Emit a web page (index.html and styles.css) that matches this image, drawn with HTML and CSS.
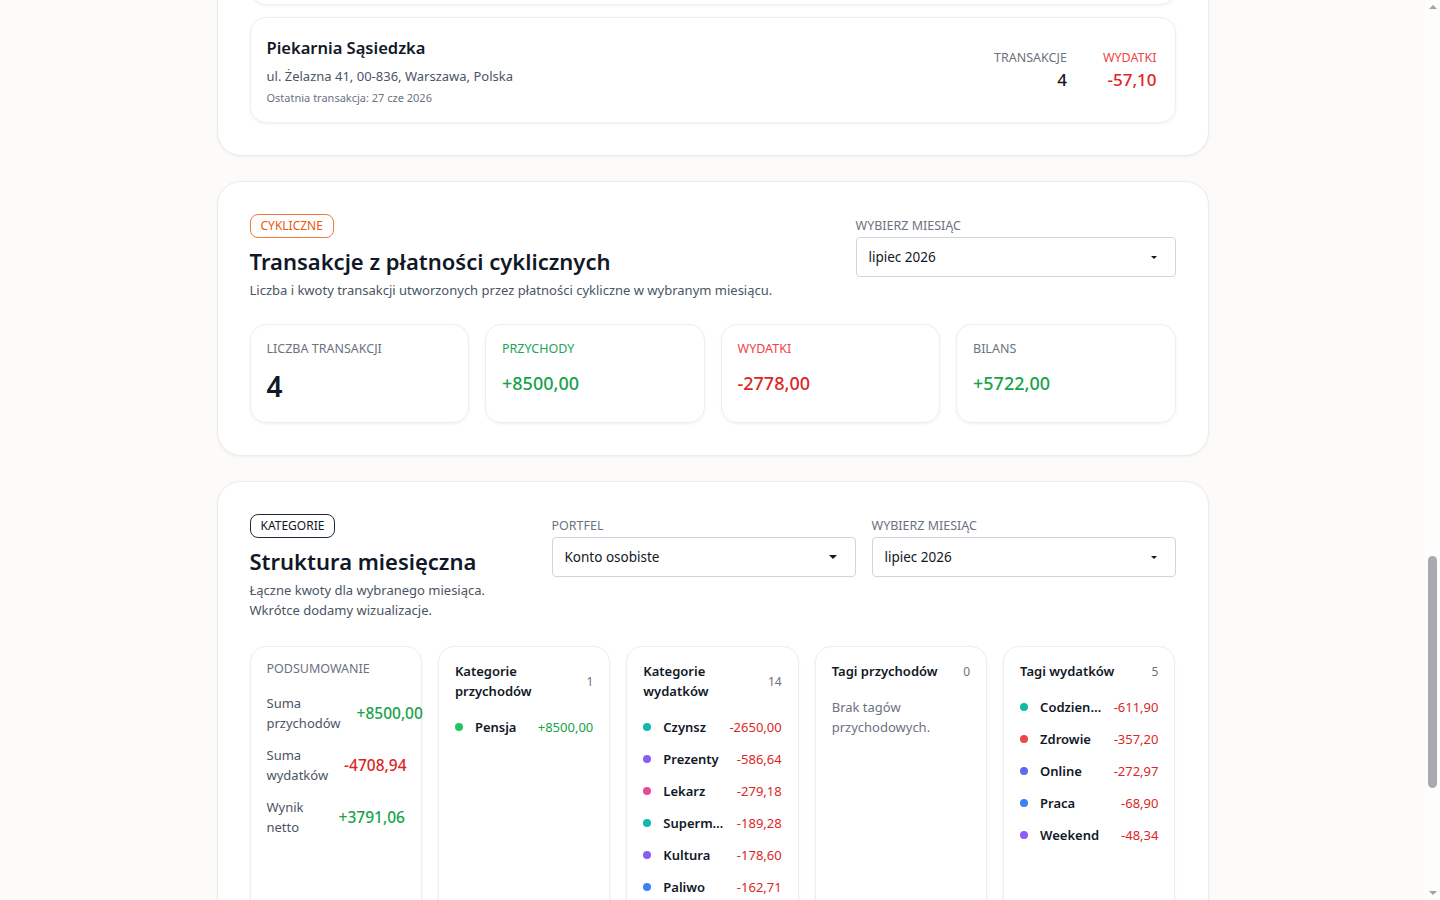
FILE: index.html
```html
<!DOCTYPE html>
<html lang="pl">
<head>
    <meta charset="utf-8">
    <title>Raporty</title>
    <link rel="stylesheet" href="styles.css">
</head>
<body>
    <main class="page">

        <!-- sprzedawcy -->
        <section class="panel">
            <div class="merchant-list">
                <div class="merchant">
                    <div class="merchant-info">
                        <h3 class="merchant-name">Biedronka</h3>
                        <p class="merchant-address">ul. Marszałkowska 104, 00-017, Warszawa, Polska</p>
                        <p class="merchant-last">Ostatnia transakcja: 29 cze 2026</p>
                    </div>
                    <div class="merchant-stats">
                        <div class="mstat">
                            <span class="mstat-label">Transakcje</span>
                            <span class="mstat-value">6</span>
                        </div>
                        <div class="mstat">
                            <span class="mstat-label red">Wydatki</span>
                            <span class="mstat-value red">-189,28</span>
                        </div>
                    </div>
                </div>
                <div class="merchant">
                    <div class="merchant-info">
                        <h3 class="merchant-name">Piekarnia Sąsiedzka</h3>
                        <p class="merchant-address">ul. Żelazna 41, 00-836, Warszawa, Polska</p>
                        <p class="merchant-last">Ostatnia transakcja: 27 cze 2026</p>
                    </div>
                    <div class="merchant-stats">
                        <div class="mstat">
                            <span class="mstat-label">Transakcje</span>
                            <span class="mstat-value">4</span>
                        </div>
                        <div class="mstat">
                            <span class="mstat-label red">Wydatki</span>
                            <span class="mstat-value red">-57,10</span>
                        </div>
                    </div>
                </div>
            </div>
        </section>

        <!-- cykliczne -->
        <section class="panel">
            <div class="panel-head">
                <div class="panel-title">
                    <span class="badge badge-orange">Cykliczne</span>
                    <h2>Transakcje z płatności cyklicznych</h2>
                    <p class="panel-desc">Liczba i kwoty transakcji utworzonych przez płatności cykliczne w wybranym miesiącu.</p>
                </div>
                <div class="field field-wide">
                    <span class="field-label">Wybierz miesiąc</span>
                    <div class="select">
                        <span>lipiec 2026</span>
                        <svg width="6" height="3" viewBox="0 0 6 3"><path d="M0 0h6L3 3z" fill="#111827"/></svg>
                    </div>
                </div>
            </div>

            <div class="stat-grid">
                <div class="stat">
                    <span class="stat-label">Liczba transakcji</span>
                    <span class="stat-value big">4</span>
                </div>
                <div class="stat">
                    <span class="stat-label green">Przychody</span>
                    <span class="stat-value green">+8500,00</span>
                </div>
                <div class="stat">
                    <span class="stat-label red">Wydatki</span>
                    <span class="stat-value red">-2778,00</span>
                </div>
                <div class="stat">
                    <span class="stat-label">Bilans</span>
                    <span class="stat-value green">+5722,00</span>
                </div>
            </div>
        </section>

        <!-- kategorie -->
        <section class="panel">
            <div class="panel-head">
                <div class="panel-title">
                    <span class="badge badge-dark">Kategorie</span>
                    <h2>Struktura miesięczna</h2>
                    <p class="panel-desc">Łączne kwoty dla wybranego miesiąca.<br>Wkrótce dodamy wizualizacje.</p>
                </div>
                <div class="filters">
                    <div class="field">
                        <span class="field-label">Portfel</span>
                        <div class="select">
                            <span>Konto osobiste</span>
                            <svg width="8" height="4" viewBox="0 0 8 4"><path d="M0 0h8L4 4z" fill="#111827"/></svg>
                        </div>
                    </div>
                    <div class="field">
                        <span class="field-label">Wybierz miesiąc</span>
                        <div class="select">
                            <span>lipiec 2026</span>
                            <svg width="6" height="3" viewBox="0 0 6 3"><path d="M0 0h6L3 3z" fill="#111827"/></svg>
                        </div>
                    </div>
                </div>
            </div>

            <div class="breakdown">
                <div class="box">
                    <span class="box-label">Podsumowanie</span>
                    <div class="sum-list">
                        <div class="sum-row">
                            <span class="sum-name">Suma przychodów</span>
                            <span class="sum-value green">+8500,00</span>
                        </div>
                        <div class="sum-row">
                            <span class="sum-name">Suma wydatków</span>
                            <span class="sum-value red">-4708,94</span>
                        </div>
                        <div class="sum-row">
                            <span class="sum-name">Wynik netto</span>
                            <span class="sum-value green">+3791,06</span>
                        </div>
                    </div>
                </div>

                <div class="box">
                    <div class="box-head">
                        <h4>Kategorie przychodów</h4>
                        <span class="count">1</span>
                    </div>
                    <ul class="items">
                        <li><i class="dot" style="background:#22c55e"></i><span class="item-name">Pensja</span><span class="item-amount green">+8500,00</span></li>
                    </ul>
                </div>

                <div class="box">
                    <div class="box-head">
                        <h4>Kategorie wydatków</h4>
                        <span class="count">14</span>
                    </div>
                    <ul class="items">
                        <li><i class="dot" style="background:#14b8a6"></i><span class="item-name">Czynsz</span><span class="item-amount red">-2650,00</span></li>
                        <li><i class="dot" style="background:#8b5cf6"></i><span class="item-name">Prezenty</span><span class="item-amount red">-586,64</span></li>
                        <li><i class="dot" style="background:#ec4899"></i><span class="item-name">Lekarz</span><span class="item-amount red">-279,18</span></li>
                        <li><i class="dot" style="background:#14b8a6"></i><span class="item-name">Supermarket</span><span class="item-amount red">-189,28</span></li>
                        <li><i class="dot" style="background:#8b5cf6"></i><span class="item-name">Kultura</span><span class="item-amount red">-178,60</span></li>
                        <li><i class="dot" style="background:#3b82f6"></i><span class="item-name">Paliwo</span><span class="item-amount red">-162,71</span></li>
                        <li><i class="dot" style="background:#f59e0b"></i><span class="item-name">Restauracje</span><span class="item-amount red">-148,20</span></li>
                        <li><i class="dot" style="background:#ef4444"></i><span class="item-name">Apteka</span><span class="item-amount red">-96,40</span></li>
                    </ul>
                </div>

                <div class="box">
                    <div class="box-head">
                        <h4>Tagi przychodów</h4>
                        <span class="count">0</span>
                    </div>
                    <p class="empty">Brak tagów przychodowych.</p>
                </div>

                <div class="box">
                    <div class="box-head">
                        <h4>Tagi wydatków</h4>
                        <span class="count">5</span>
                    </div>
                    <ul class="items">
                        <li><i class="dot" style="background:#14b8a6"></i><span class="item-name">Codziennie</span><span class="item-amount red">-611,90</span></li>
                        <li><i class="dot" style="background:#ef4444"></i><span class="item-name">Zdrowie</span><span class="item-amount red">-357,20</span></li>
                        <li><i class="dot" style="background:#6366f1"></i><span class="item-name">Online</span><span class="item-amount red">-272,97</span></li>
                        <li><i class="dot" style="background:#3b82f6"></i><span class="item-name">Praca</span><span class="item-amount red">-68,90</span></li>
                        <li><i class="dot" style="background:#8b5cf6"></i><span class="item-name">Weekend</span><span class="item-amount red">-48,34</span></li>
                    </ul>
                </div>
            </div>
        </section>

    </main>

    <!-- pasek przewijania okna -->
    <div class="scrollbar">
        <svg class="sb-arrow sb-up" width="8" height="4" viewBox="0 0 8 4"><path d="M0 4L4 0l4 4z" fill="#a3a3a3"/></svg>
        <div class="sb-thumb"></div>
        <svg class="sb-arrow sb-down" width="8" height="4" viewBox="0 0 8 4"><path d="M0 0h8L4 4z" fill="#a3a3a3"/></svg>
    </div>
</body>
</html>
```

FILE: styles.css
```css
* {
    box-sizing: border-box;
}

body {
    margin: 0;
    padding: 0 15px 0 0;
    background-color: #fcfbf9;
    font-family: "Noto Sans", "Open Sans", sans-serif;
    color: #111827;
}

h2, h3, h4, p, ul {
    margin: 0;
    padding: 0;
}

.page {
    width: 992px;
    margin: -134px auto 0;
    display: flex;
    flex-direction: column;
    gap: 25px;
    padding-bottom: 40px;
}

.panel {
    background: #ffffff;
    border: 1px solid #efece7;
    border-radius: 24px;
    padding: 32px;
    box-shadow: 0 1px 3px rgba(30, 20, 10, 0.05);
}

.green { color: #16a34a; }
.red { color: #dc2626; }

/* sprzedawcy */

.merchant-list {
    display: flex;
    flex-direction: column;
    gap: 12px;
}

.merchant {
    display: flex;
    justify-content: space-between;
    align-items: center;
    padding: 18px 18px 16px 16px;
    border: 1px solid #f1eeea;
    border-radius: 16px;
    box-shadow: 0 1px 3px rgba(30, 20, 10, 0.06);
}

.merchant-name {
    font-size: 16.5px;
    line-height: 24px;
    font-weight: 600;
}

.merchant-address {
    margin-top: 6px;
    font-size: 13px;
    line-height: 20px;
    color: #4b5563;
}

.merchant-last {
    margin-top: 3px;
    font-size: 11px;
    line-height: 17px;
    color: #6b7280;
}

.merchant-stats {
    display: flex;
    gap: 36px;
}

.mstat {
    display: flex;
    flex-direction: column;
    align-items: flex-end;
}

.mstat-label {
    font-size: 12.5px;
    line-height: 16px;
    text-transform: uppercase;
    color: #6b7280;
}

.mstat-label.red { color: #ef4444; }

.mstat-value {
    margin-top: 2px;
    font-size: 17px;
    line-height: 24px;
    font-weight: 500;
}

/* nagłówki paneli */

.panel-head {
    display: flex;
    justify-content: space-between;
    align-items: flex-start;
    gap: 16px;
}

.panel-title {
    display: flex;
    flex-direction: column;
    align-items: flex-start;
}

.badge {
    padding: 0 10px;
    font-size: 12px;
    line-height: 22px;
    text-transform: uppercase;
    border-radius: 8px;
    border: 1px solid;
}

.badge-orange {
    color: #ea580c;
    border-color: #f07a3a;
}

.badge-dark {
    color: #111827;
    border-color: #1f2937;
}

.panel-title h2 {
    margin-top: 8px;
    font-size: 22px;
    line-height: 30px;
    font-weight: 600;
}

.panel-desc {
    margin-top: 4px;
    font-size: 13px;
    line-height: 20px;
    color: #4b5563;
}

.field {
    display: flex;
    flex-direction: column;
    gap: 3px;
    padding-top: 4px;
    width: 304px;
}

.field-wide {
    width: 320px;
}

.field-label {
    font-size: 12.5px;
    line-height: 16px;
    text-transform: uppercase;
    color: #6b7280;
}

.select {
    height: 40px;
    display: flex;
    align-items: center;
    justify-content: space-between;
    padding: 0 18px 0 12px;
    border: 1px solid #d1d5db;
    border-radius: 4px;
    font-size: 13.5px;
    background: #ffffff;
}

.filters {
    display: flex;
    gap: 16px;
}

/* statystyki */

.stat-grid {
    margin-top: 24px;
    display: grid;
    grid-template-columns: repeat(4, 1fr);
    gap: 16px;
}

.stat {
    display: flex;
    flex-direction: column;
    gap: 12px;
    padding: 16px 16px 25px;
    border: 1px solid #f1eeea;
    border-radius: 16px;
    box-shadow: 0 1px 3px rgba(30, 20, 10, 0.06);
}

.stat-label {
    font-size: 12.5px;
    line-height: 16px;
    text-transform: uppercase;
    color: #6b7280;
}

.stat-label.green { color: #22a55a; }
.stat-label.red { color: #ef4444; }

.stat-value {
    font-size: 18px;
    line-height: 28px;
    font-weight: 500;
}

.stat-value.big {
    font-size: 28px;
    line-height: 34px;
    margin-bottom: -6px;
    font-weight: 600;
}

/* struktura */

.breakdown {
    margin-top: 26px;
    display: grid;
    grid-template-columns: repeat(5, 1fr);
    gap: 16px;
}

.box {
    min-width: 0;
    padding: 14px 16px 24px;
    border: 1px solid #f1eeea;
    border-radius: 16px;
    box-shadow: 0 1px 3px rgba(30, 20, 10, 0.06);
}

.box-label {
    display: block;
    font-size: 12.5px;
    line-height: 16px;
    text-transform: uppercase;
    color: #6b7280;
}

.box-head {
    display: flex;
    justify-content: space-between;
    align-items: center;
    gap: 8px;
}

.box-head h4 {
    font-size: 13px;
    line-height: 20px;
    font-weight: 600;
}

.count {
    font-size: 12px;
    color: #6b7280;
}

.sum-list {
    margin-top: 16px;
    display: flex;
    flex-direction: column;
    gap: 12px;
}

.sum-row {
    display: flex;
    align-items: center;
    gap: 16px;
}

.sum-name {
    font-size: 13px;
    line-height: 20px;
    color: #4b5563;
}

.sum-value {
    white-space: nowrap;
    font-size: 15.5px;
    font-weight: 500;
}

.items {
    list-style: none;
    margin-top: 16px;
    display: flex;
    flex-direction: column;
    gap: 12px;
}

.items li {
    display: flex;
    align-items: center;
    font-size: 13px;
    line-height: 20px;
}

.dot {
    flex: none;
    width: 8px;
    height: 8px;
    border-radius: 50%;
    margin-right: 12px;
}

.item-name {
    flex: 1;
    min-width: 0;
    font-weight: 600;
    white-space: nowrap;
    overflow: hidden;
    text-overflow: ellipsis;
}

.item-amount {
    margin-left: 10px;
    white-space: nowrap;
}

.empty {
    margin-top: 16px;
    font-size: 13px;
    line-height: 20px;
    color: #6b7280;
}

/* pasek przewijania */

.scrollbar {
    position: fixed;
    top: 0;
    right: 0;
    width: 15px;
    height: 100vh;
    background: #fdfdfc;
}

.sb-arrow {
    position: absolute;
    left: 4px;
}

.sb-up {
    top: 5px;
}

.sb-down {
    bottom: 5px;
}

.sb-thumb {
    position: absolute;
    top: 556px;
    left: 3px;
    width: 9px;
    height: 232px;
    border-radius: 5px;
    background: #a9aaaf;
}
```
